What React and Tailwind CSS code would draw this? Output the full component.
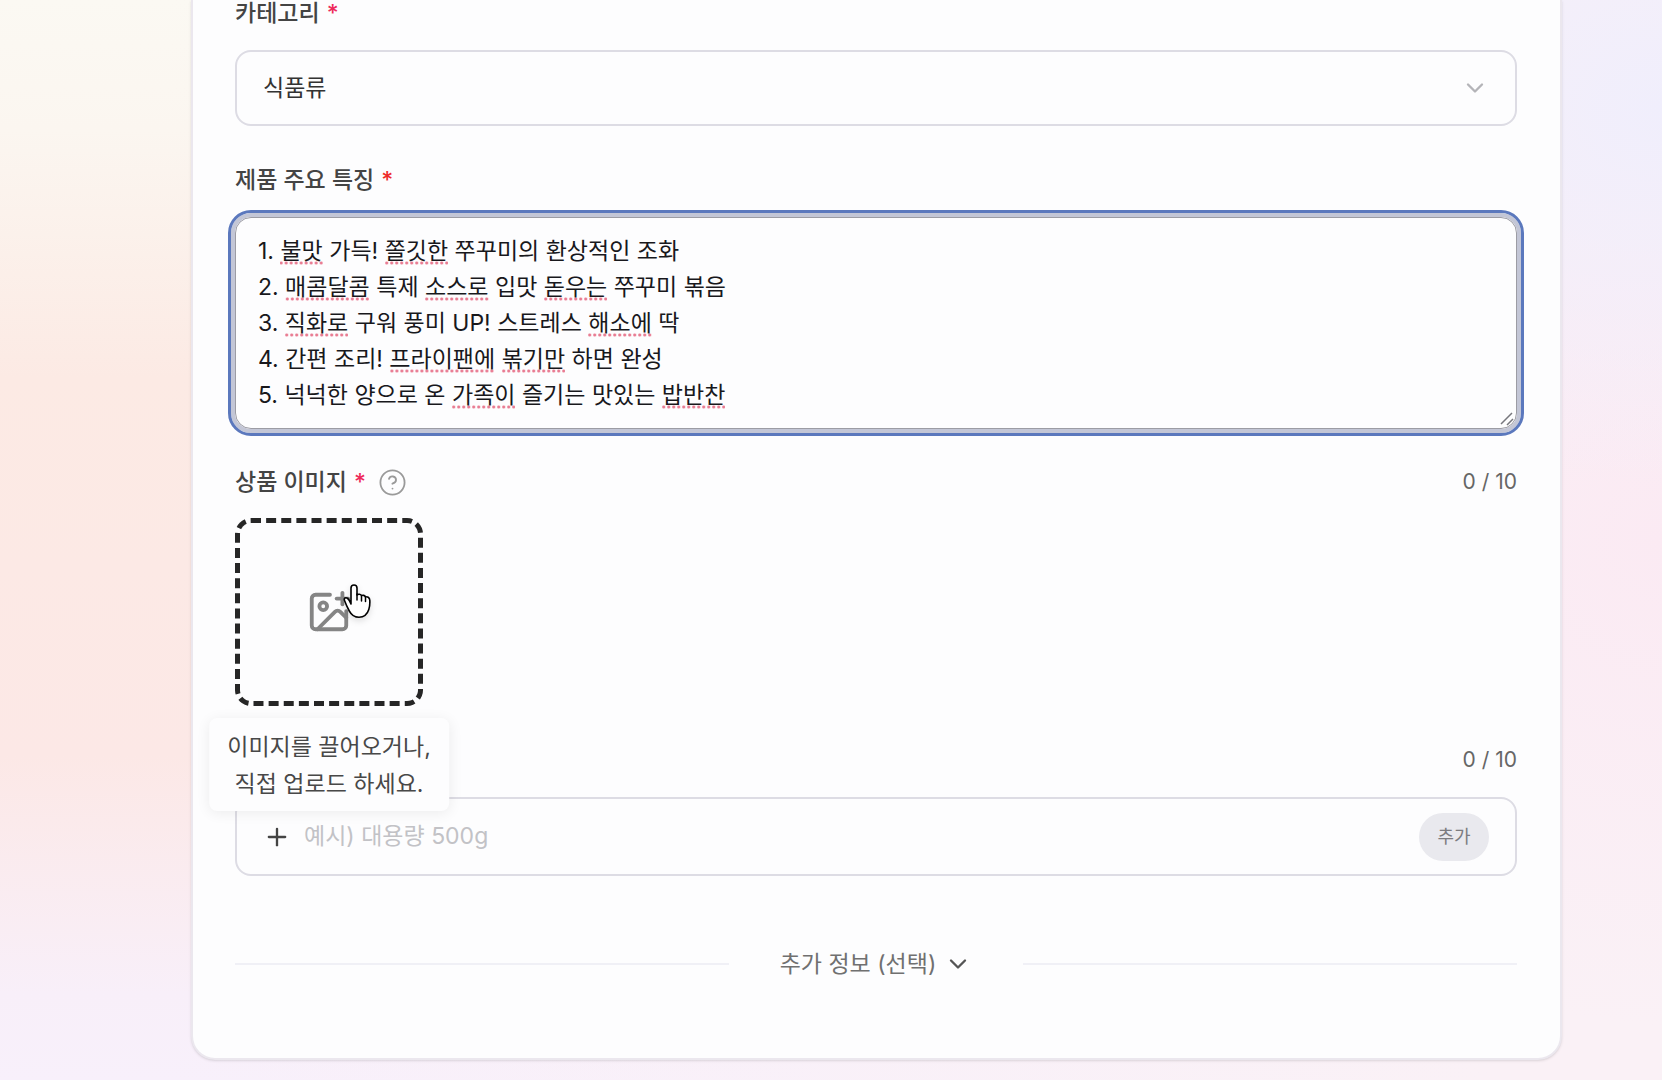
import React, { useState } from 'react';
import { ChevronDown, CircleHelp, ImagePlus, Plus } from 'lucide-react';

// words wrapped in [] get the spell-check dots
const FEATURES = [
  '1. [불맛] 가득! [쫄깃한] 쭈꾸미의 환상적인 조화',
  '2. [매콤달콤] 특제 [소스로] 입맛 [돋우는] 쭈꾸미 볶음',
  '3. [직화로] 구워 풍미 UP! 스트레스 [해소에] 딱',
  '4. 간편 조리! [프라이팬에] [볶기만] 하면 완성',
  '5. 넉넉한 양으로 온 [가족이] 즐기는 맛있는 [밥반찬]',
];

const INITIAL_TEXT = FEATURES.join('\n').replace(/[[\]]/g, '');

function Required({ color = 'text-[#ee2a5a]' }) {
  return <span className={color} aria-hidden="true">*</span>;
}

function Counter() {
  return <span className="ml-auto text-[21px] leading-6 text-[#666]">0 / 10</span>;
}

function SpellingMarks() {
  return (
    <div
      aria-hidden="true"
      className="col-start-1 row-start-1 px-[22px] py-[15px] border border-transparent leading-9 text-transparent whitespace-pre-wrap pointer-events-none select-none"
    >
      {FEATURES.map((line) => (
        <div key={line}>
          {line.split(/(\[.*?\])/).map((part, i) =>
            part.startsWith('[') ? (
              <span
                key={i}
                className="bg-[radial-gradient(circle,#e8788f_1px,transparent_2px)] bg-[length:5px_4px] bg-bottom bg-repeat-x"
              >
                {part.slice(1, -1)}
              </span>
            ) : (
              part
            )
          )}
        </div>
      ))}
    </div>
  );
}

function ResizeGrip() {
  return (
    <svg
      width="16"
      height="16"
      viewBox="0 0 16 16"
      className="absolute bottom-0.5 right-0.5 pointer-events-none"
      aria-hidden="true"
    >
      <path d="M2 13L13 2M8 14L14 8" stroke="#77777d" strokeWidth="1.500" fill="none" />
    </svg>
  );
}

function HandCursor() {
  return (
    <svg
      width="30"
      height="37"
      viewBox="0 0 30 37"
      className="absolute left-[108px] top-[66px] drop-shadow-md pointer-events-none"
      aria-hidden="true"
    >
      <path
        d="M8 20V4a3 3 0 0 1 6 0v7c1-1.300 4-1 4.500.8c1-1 3.500-.6 4 1.300c1.500-.8 4.200 0 4.300 3.200c.2 4 0 6.500-1 9.200c-1.600 5-4.800 7.700-9.800 7.700c-5 0-7.200-1.700-9.700-6.200c-1.700-3.200-3.400-6.600-4.800-10.500c-.9-2.500 1.300-3.500 3.200-2c1.600 1.300 2.500 3 3.300 5.500z"
        fill="white"
        stroke="black"
        strokeWidth="1.600"
        strokeLinejoin="round"
      />
      <path d="M14 10v6M18.500 12v5M22.500 13.500v4" stroke="black" strokeWidth="1.500" strokeLinecap="round" />
    </svg>
  );
}

export default function App() {
  const [features, setFeatures] = useState(INITIAL_TEXT);

  return (
    <main className="min-h-screen overflow-hidden pb-5 pl-[191px] pr-[100px] text-[23px] font-['Inter','Noto_Sans_CJK_KR',sans-serif] bg-[radial-gradient(ellipse_30%_35%_at_100%_10%,#f0eefc,transparent),radial-gradient(ellipse_30%_45%_at_100%_50%,#fbeaf3,transparent),linear-gradient(to_right,transparent_10%,#faf1f6_90%),linear-gradient(to_bottom,#fbf9f3_0%,#fbf6f0_12%,#fceae4_35%,#fce8e6_70%,#f8eff9_92%,#f8f0fb_100%)]">
      <form
        className="rounded-b-3xl border-2 border-t-0 border-[#ebe7ee] bg-[#fdfdfe] pl-[42px] pr-[43px] pt-px pb-20 shadow-sm"
        onSubmit={(e) => e.preventDefault()}
      >
        <section className="mb-[42px]">
          <label htmlFor="category" className="flex gap-[7px] leading-6 font-medium text-[#444]">
            카테고리 <Required />
          </label>
          <div className="relative mt-[25px]">
            <select
              id="category"
              defaultValue="food"
              className="block h-[76px] w-full appearance-none rounded-2xl border-2 border-[#dddce4] bg-transparent px-[26px] text-[#333]"
            >
              <option value="food">식품류</option>
            </select>
            <ChevronDown size={28} className="absolute right-7 top-6 text-[#b4b4b8] pointer-events-none" />
          </div>
        </section>

        <section className="mb-[41px]">
          <label htmlFor="features" className="flex gap-[7px] leading-6 font-medium text-[#444]">
            제품 주요 특징 <Required color="text-[#ee2a2a]" />
          </label>
          <div className="relative mt-[25px] grid rounded-2xl ring-4 ring-[#c3c6d6] outline-3 outline-offset-4 outline-[#5b78bd]">
            <SpellingMarks />
            <textarea
              id="features"
              rows={5}
              spellCheck={false}
              value={features}
              onChange={(e) => setFeatures(e.target.value)}
              className="col-start-1 row-start-1 block w-full resize-none rounded-2xl border border-[#9c9ca4] bg-transparent px-[22px] py-[15px] leading-9 text-[#18181c] outline-none"
            />
            <ResizeGrip />
          </div>
        </section>

        <section className="mb-[42px]">
          <div className="flex items-center leading-6">
            <label htmlFor="image" className="flex gap-[7px] font-medium text-[#444]">
              상품 이미지 <Required />
            </label>
            <button type="button" aria-label="도움말" className="-my-1 ml-3 text-[#9a9a9a]">
              <CircleHelp size={29} strokeWidth={1.5} />
            </button>
            <Counter />
          </div>
          <div className="relative mt-6 size-[188px]">
            <button
              id="image"
              type="button"
              className="flex size-full items-center justify-center rounded-2xl border-[5px] border-dashed border-[#262626] text-[#858585]"
            >
              <ImagePlus size={46} />
            </button>
            <HandCursor />
            <p
              role="tooltip"
              className="absolute left-1/2 top-full mt-3 -translate-x-1/2 rounded-lg bg-[#fdfdfe] px-[18px] pt-[11px] pb-2 text-center leading-[37px] whitespace-nowrap text-[#484848] shadow-[0_2px_14px_#00000012]"
            >
              이미지를 끌어오거나,
              <br />
              직접 업로드 하세요.
            </p>
          </div>
        </section>

        <section>
          <div className="flex">
            <Counter />
          </div>
          <div className="mt-[25px] flex h-[79px] items-center rounded-2xl border-2 border-[#dddce4] px-[26px]">
            <Plus size={28} className="shrink-0 text-[#444]" />
            <input
              type="text"
              aria-label="키워드"
              placeholder="예시) 대용량 500g"
              className="ml-[13px] min-w-0 flex-1 bg-transparent outline-none placeholder:text-[#c2c2c6]"
            />
            <button type="button" className="h-12 w-[70px] rounded-full bg-[#e9e9ee] text-lg text-[#7c7c80]">
              추가
            </button>
          </div>
        </section>

        <div className="mt-[74px] flex items-center gap-[51px]">
          <hr className="flex-1 border-t-2 border-[#f0f0f6]" />
          <button type="button" className="flex items-center gap-2 leading-7 text-[#707070]">
            추가 정보 (선택)
            <ChevronDown size={28} className="text-[#555]" />
          </button>
          <hr className="flex-1 border-t-2 border-[#f0f0f6]" />
        </div>
      </form>
    </main>
  );
}
